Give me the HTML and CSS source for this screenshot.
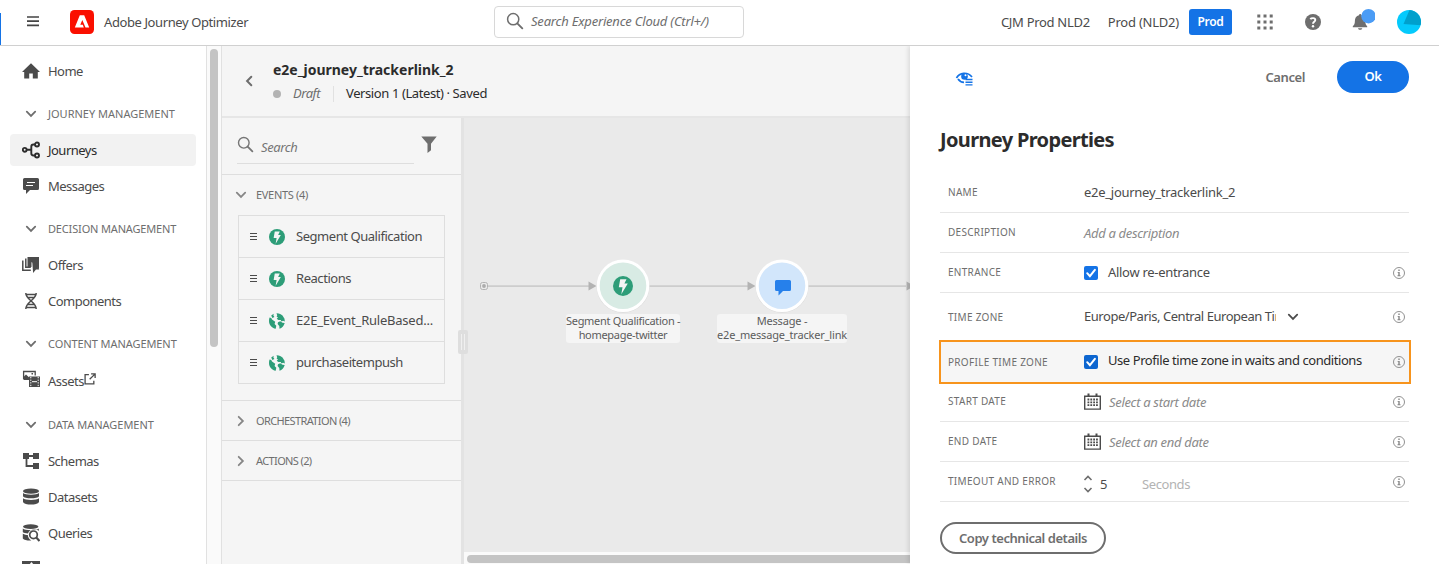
FILE: index.html
```html
<!DOCTYPE html>
<html lang="en">
<head>
<meta charset="utf-8">
<title>Adobe Journey Optimizer</title>
<link rel="stylesheet" href="styles.css">
</head>
<body>
<svg class="defs" aria-hidden="true">
  <symbol id="down" viewBox="0 0 12 8"><path d="M1.8 1.7 6 5.9l4.2-4.2" fill="none" stroke="currentColor" stroke-width="1.8" stroke-linecap="round"/></symbol>
  <symbol id="right" viewBox="0 0 8 12"><path d="M1.7 1.8 5.9 6l-4.2 4.2" fill="none" stroke="currentColor" stroke-width="1.8" stroke-linecap="round"/></symbol>
  <symbol id="search" viewBox="0 0 18 18"><circle cx="7.2" cy="7.2" r="5.6" fill="none" stroke="currentColor" stroke-width="1.5"/><path d="m11.3 11.3 5 5" stroke="currentColor" stroke-width="1.9" stroke-linecap="round"/></symbol>
  <symbol id="info" viewBox="0 0 12 12"><circle cx="6" cy="6" r="5.5" fill="none" stroke="currentColor" stroke-width=".9"/><path d="M5.3 2.6h1.4v1.5H5.3zM4.6 4.9h2.1v3.4h.8v.9H4.5v-.9h.8V5.8h-.7z" fill="currentColor"/></symbol>
  <symbol id="bolt" viewBox="0 0 20 20"><circle cx="10" cy="10" r="10" fill="#2d9d78"/><path d="M7.2 3.2h6.3l-2.1 4.4h3.4L8.3 18.3l1.2-7.1H5.8z" fill="#f5f5f5"/></symbol>
  <symbol id="globe" viewBox="0 0 16 16"><path d="M.6 4.600 2.300 5 3 6.600l3.200 2.100-.6 2.300 1.700 1.800-.6 2.900C2.700 15.200 0 11.800 0 8q0-1.900.6-3.400zM2.200 2.500 4.700.8l-.3 1.700 1 1.500-2 .9zM7.500.2c2.700-.1 4.700 1 6 2.200l2 3.300.3 2.800-1.700-.8-1.700.8-.6-1.500-2.400.1-1.700-1.400 1.300-1.300-1.400-.8.6-1.400zM9 9.200l2.200-1 2.300 1.600 2.200.2c-.7 3-2.800 5.200-5.200 5.800l-.2-2.700L8.600 11z" fill="#2d9d78"/></symbol>
  <symbol id="cal" viewBox="0 0 17 17"><path d="M.7 3.200h15.600v12.900H.7z" fill="none" stroke="currentColor" stroke-width="1.400"/><path d="M4.500.5v3.600M12.500.5v3.600" stroke="currentColor" stroke-width="2"/><path d="M3.500 6.500h10.500M3.500 9.300h10.500M3.500 12.100h10.500" stroke="currentColor" stroke-width="1.800" stroke-dasharray="1.800 1.050"/></symbol>
  <symbol id="check" viewBox="0 0 14 14"><path d="m3.200 7.200 2.700 3 5-6.300" fill="none" stroke="#fff" stroke-width="2" stroke-linecap="round"/></symbol>
</svg>

<header class="topbar">
  <svg class="burger" viewBox="0 0 12 11"><path d="M0 1h12M0 5.200h12M0 9.400h12" stroke="#444" stroke-width="1.700"/></svg>
  <svg class="logo" viewBox="0 0 24 24"><rect width="24" height="24" rx="4.500" fill="#fa0f00"/><path d="M9.800 5.300h4.400l5 12.200h-3.700L12.300 9.900l-2 4.800h2.500l1 2.800H4.800z" fill="#fff"/></svg>
  <span class="product">Adobe Journey Optimizer</span>
  <div class="global-search"><svg><use href="#search"/></svg><span>Search Experience Cloud (Ctrl+/)</span></div>
  <div class="account">
    <span class="org">CJM Prod NLD2</span><span class="sandbox">Prod (NLD2)</span><span class="badge">Prod</span>
    <svg class="apps" viewBox="0 0 16 16"><path d="M.3 2h15.400M.3 8h15.400M.3 14h15.400" stroke="#6e6e6e" stroke-width="3" stroke-dasharray="3 3.200"/></svg>
    <svg class="help" viewBox="0 0 16 16"><circle cx="8" cy="8" r="8" fill="#6e6e6e"/><path d="M5.300 5.100C6.200 3.900 10.300 3.300 10.300 6c0 1.700-2.300 1.900-2.300 3.700" fill="none" stroke="#fff" stroke-width="1.900"/><circle cx="8" cy="12.200" r="1.200" fill="#fff"/></svg>
    <svg class="bell" viewBox="0 0 24 24"><path d="M8 7.200a1.200 1.200 0 0 1 2.400 0c3 .7 3.900 3 3.900 5.600 0 3.200.6 4.200 1.900 5.500v1H1.800v-1c1.400-1.300 2.100-2.300 2.100-5.500 0-2.600 1.200-4.900 4.100-5.600zM7 20.200h4.300c-.4 2.200-3.900 2.200-4.300 0z" fill="#6e6e6e"/><circle cx="17.500" cy="8.200" r="7.200" fill="#4b9cf5"/></svg>
    <svg class="avatar" viewBox="0 0 24 24"><circle cx="12" cy="12" r="12" fill="#04cafc"/><path d="M12.500 0A12 12 0 0 1 23.600 15.200L6.500 14z" fill="#00a0cc"/></svg>
  </div>
</header>

<div class="shell">
  <nav class="sidebar">
    <a class="nav home"><svg viewBox="0 0 18 18"><path d="M9 1.200 18 10h-2.200v6.500h-5v-5H7.200v5h-5V10H0z" fill="currentColor"/></svg>Home</a>
    <div class="group"><svg><use href="#down"/></svg>JOURNEY MANAGEMENT</div>
    <a class="nav active"><svg viewBox="0 0 18 18"><g fill="none" stroke="currentColor" stroke-width="1.900"><circle cx="2.700" cy="8.800" r="1.900"/><circle cx="15" cy="3.500" r="2"/><circle cx="15" cy="14.500" r="2"/><path d="M4.600 8.800H9M13 3.500h-1.500Q9.300 3.500 9.300 5.700v6.600q0 2.200 2.200 2.200H13"/></g></svg>Journeys</a>
    <a class="nav"><svg viewBox="0 0 18 18"><path d="M2.500 1h13Q17 1 17 2.500v9q0 1.500-1.500 1.500H8l-4 4v-4H2.500Q1 13 1 11.500v-9Q1 1 2.500 1z" fill="currentColor"/><path d="M5 5.500h8M4 8.500h7" stroke="#fff"/></svg>Messages</a>
    <div class="group decision"><svg><use href="#down"/></svg>DECISION MANAGEMENT</div>
    <a class="nav"><svg viewBox="0 0 18 18"><path d="M.8 4.500v9.700h8M3.800 2.500v8.800h5" fill="none" stroke="currentColor" stroke-width="1.500"/><path d="M5.500 1H17v12l-7.500-7v5h-4zM10.300 6.300l7 7.100-3.300.2-2.900 3.300z" fill="currentColor"/></svg>Offers</a>
    <a class="nav"><svg viewBox="0 0 18 18"><path d="M3.800 1c0 7 10.400 8.500 10.400 16M14.200 1c0 7-10.400 8.500-10.400 16M4 2.500h10M5.500 5.500h7M5.500 12.500h7M4 15.500h10" fill="none" stroke="currentColor" stroke-width="1.500"/></svg>Components</a>
    <div class="group"><svg><use href="#down"/></svg>CONTENT MANAGEMENT</div>
    <a class="nav assets"><svg class="media" viewBox="0 0 18 18"><path d="M1.600 9.500v-8h11.600v4" fill="none" stroke="currentColor" stroke-width="1.300"/><path d="M2 9V6.500l2-2 3.200 3V10H2zM9.500 3h1.500v1.500H9.500zM7 6.500h11V17H7z" fill="currentColor"/><path d="M8.800 7v10M16.200 7v10" stroke="#fff" stroke-dasharray="1.300 1.300"/><path d="M10 11.700h5" stroke="#fff"/></svg>Assets<svg class="external" viewBox="0 0 11 11"><path d="M4.500 1.500H1v8.500h8V7M6.500.8h3.700v3.700M10 1 5.200 5.800" fill="none" stroke="currentColor" stroke-width="1.200"/></svg></a>
    <div class="group"><svg><use href="#down"/></svg>DATA MANAGEMENT</div>
    <a class="nav"><svg viewBox="0 0 18 18"><path d="M1 1h6v6H1zM11 1h6v6h-6zM11 11h6v6h-6z" fill="currentColor"/><path d="M6 4h6M4.500 6v8H12" fill="none" stroke="currentColor" stroke-width="1.800"/></svg>Schemas</a>
    <a class="nav"><svg viewBox="0 0 18 18"><ellipse cx="9" cy="3.200" rx="8" ry="2.600" fill="currentColor"/><path d="M1 5c2 2.300 14 2.300 16 0v3.200c-1.500 2.700-14.500 2.700-16 0zM1 10.200c2 2.300 14 2.300 16 0v3.700c-1.500 3.500-14.500 3.500-16 0z" fill="currentColor"/></svg>Datasets</a>
    <a class="nav"><svg viewBox="0 0 18 18"><ellipse cx="8.700" cy="2.600" rx="7.700" ry="2.400" fill="currentColor"/><path d="M.8 4.600c2 2.200 14 2.200 16 0V7C14 4.500 7 5.300 6 9.500 4 9.400 1.500 9 .8 8zM.8 9.700c1.500 1 3.500 1.200 5 1.200.2 2.300 1.500 4.500 3.500 5.600-3 .4-7-.3-8.500-2z" fill="currentColor"/><circle cx="11.500" cy="10.800" r="3.800" fill="#fff" stroke="currentColor" stroke-width="1.700"/><path d="m14.300 13.600 3.200 3.400" stroke="currentColor" stroke-width="2.200"/></svg>Queries</a>
    <a class="nav"><svg viewBox="0 0 18 18"><path d="M0 1h18v16H0z" fill="currentColor"/><path d="m9.500 2 2 2.500h-4z" fill="#fff"/></svg></a>
  </nav>
  <div class="gutter"><div class="thumb"></div></div>

  <main class="journey">
    <section class="journey-head">
      <svg class="back" viewBox="0 0 8 12"><path d="M6.300 1.800 2.100 6l4.200 4.200" fill="none" stroke="#6e6e6e" stroke-width="2" stroke-linecap="round"/></svg>
      <div>
        <h1>e2e_journey_trackerlink_2</h1>
        <div class="status"><i></i><em>Draft</em><span>Version 1 (Latest) · Saved</span></div>
      </div>
    </section>
    <div class="workspace">
      <aside class="palette">
        <div class="palette-search">
          <div class="field"><svg><use href="#search"/></svg><span>Search</span></div>
          <svg class="filter" viewBox="0 0 16 17"><path d="M.3.500h15.400L10 7.800v6.500L6.500 17V7.800z" fill="#6e6e6e"/></svg>
        </div>
        <div class="section open"><svg><use href="#down"/></svg>EVENTS (4)</div>
        <ul class="events">
          <li><b></b><svg><use href="#bolt"/></svg><span>Segment Qualification</span></li>
          <li><b></b><svg><use href="#bolt"/></svg><span>Reactions</span></li>
          <li><b></b><svg><use href="#globe"/></svg><span class="wide">E2E_Event_RuleBased...</span></li>
          <li><b></b><svg><use href="#globe"/></svg><span>purchaseitempush</span></li>
        </ul>
        <div class="section"><svg><use href="#right"/></svg>ORCHESTRATION (4)</div>
        <div class="section"><svg><use href="#right"/></svg>ACTIONS (2)</div>
        <div class="grip"></div>
      </aside>
      <div class="canvas">
        <svg class="flow" viewBox="464 117 446 435">
          <path d="M488 286.200h102M649 286.200h100M808 286.200h98" stroke="#cdcdcd" stroke-width="1.700"/>
          <path d="m588.500 281.500 8 4.500-8 4.500zM747.500 281.500l8 4.500-8 4.500zM906.500 281.500l8 4.500-8 4.500z" fill="#b3b3b3"/>
          <rect x="480.500" y="282.500" width="7" height="7" rx="2" fill="#eaeaea" stroke="#b3b3b3"/><circle cx="484" cy="286" r="1.900" fill="#acacac"/>
          <circle cx="623" cy="286.300" r="26.500" fill="#dcdcdc"/><circle cx="623" cy="285.800" r="24.800" fill="#d8ebe4" stroke="#fff" stroke-width="3"/>
          <use href="#bolt" x="613" y="276" width="20" height="20"/>
          <circle cx="782" cy="286.300" r="26.500" fill="#dcdcdc"/><circle cx="782" cy="285.800" r="24.800" fill="#d2e6fb" stroke="#fff" stroke-width="3"/>
          <path d="M776.500 280h13q1.500 0 1.500 1.500v8q0 1.500-1.500 1.500H783l-4.500 4.500V291h-2q-1.500 0-1.500-1.500v-8q0-1.500 1.500-1.500z" fill="#2680eb"/>
        </svg>
        <div class="label segment">Segment Qualification -<br>homepage-twitter</div>
        <div class="label message">Message -<br>e2e_message_tracker_link</div>
        <div class="hscroll"><div></div></div>
      </div>
    </div>
  </main>

  <aside class="properties">
    <div class="actions">
      <svg class="preview" viewBox="0 0 20 18"><path d="M1.500 9C4.500 3.300 12.500 2.500 17 8M3 10c1.500 2.200 3.500 3.200 6 3.300" fill="none" stroke="#1473e6" stroke-width="1.700"/><circle cx="9.500" cy="7.500" r="3.300" fill="#1473e6"/><circle cx="10.500" cy="6.300" r="1" fill="#fff"/><path d="M10.500 10.500h7M10.500 13.200h7M10.500 15.900h7" stroke="#1473e6" stroke-width="1.400"/></svg>
      <span class="cancel">Cancel</span><span class="ok">Ok</span>
    </div>
    <h2>Journey Properties</h2>
    <div class="rows">
      <div class="row"><label>NAME</label><span class="name">e2e_journey_trackerlink_2</span></div>
      <div class="row"><label>DESCRIPTION</label><em>Add a description</em></div>
      <div class="row"><label>ENTRANCE</label><svg class="box"><use href="#check"/></svg><span class="option allow">Allow re-entrance</span><svg class="info"><use href="#info"/></svg></div>
      <div class="row zone"><label>TIME ZONE</label><span class="clip">Europe/Paris, Central European Time</span><svg class="drop"><use href="#down"/></svg><svg class="info"><use href="#info"/></svg></div>
      <div class="row highlight"><label>PROFILE TIME ZONE</label><svg class="box"><use href="#check"/></svg><span class="option">Use Profile time zone in waits and conditions</span><svg class="info"><use href="#info"/></svg></div>
      <div class="row start"><label>START DATE</label><svg class="cal"><use href="#cal"/></svg><em>Select a start date</em><svg class="info"><use href="#info"/></svg></div>
      <div class="row"><label>END DATE</label><svg class="cal"><use href="#cal"/></svg><em>Select an end date</em><svg class="info"><use href="#info"/></svg></div>
      <div class="row timeout"><label>TIMEOUT AND ERROR</label><svg class="stepper" viewBox="0 0 10 18"><path d="M1.500 5 5 1.500 8.500 5M1.500 13 5 16.500 8.500 13" fill="none" stroke="#6e6e6e" stroke-width="1.600"/></svg><span class="amount">5</span><span class="unit">Seconds</span><svg class="info"><use href="#info"/></svg></div>
    </div>
    <span class="copy">Copy technical details</span>
  </aside>
</div>
</body>
</html>
```
FILE: styles.css
```css
* { box-sizing: border-box; }
body { margin: 0; width: 1439px; height: 564px; overflow: hidden; background: #fff; color: #4b4b4b; font: 13px/18px "Noto Sans", "Open Sans", sans-serif; letter-spacing: -.4px; }
svg { display: block; flex: none; }
span, em { white-space: nowrap; }
.defs { position: absolute; width: 0; height: 0; }

.topbar { height: 46px; border-bottom: 1px solid #d0d0d0; display: flex; align-items: center; padding: 0 18px 2px 27px; position: relative; }
.topbar::before { content: ""; position: absolute; left: 0; top: 13px; width: 1px; height: 32px; background: #1473e6; }
.burger { width: 12px; height: 11px; }
.logo { width: 24px; height: 24px; margin-left: 31px; }
.product { margin-left: 10px; width: 390px; }
.global-search { width: 250px; height: 32px; border: 1px solid #d8d8d8; border-radius: 4px; display: flex; align-items: center; gap: 7px; padding: 0 0 1px 11px; color: #6e6e6e; font-style: italic; letter-spacing: -.2px; }
.global-search svg { width: 18px; height: 18px; }
.account { margin-left: auto; display: flex; align-items: center; letter-spacing: -.3px; }
.sandbox { margin: 0 10px 0 18px; letter-spacing: -.22px; }
.badge { width: 43px; height: 26px; border-radius: 3px; background: #1473e6; color: #fff; font-size: 12px; line-height: 25px; font-weight: 600; text-align: center; }
.apps { width: 16px; height: 16px; margin-left: 25px; }
.help { width: 16px; height: 16px; margin-left: 32px; }
.bell { width: 24px; height: 24px; margin: -4px 1px 0 30px; }
.avatar { width: 24px; height: 24px; margin-left: 21px; }

.shell { display: flex; height: 518px; }
.sidebar { width: 207px; border-right: 1px solid #e1e1e1; overflow: hidden; padding: 10px 10px 0; }
.nav { height: 32px; margin-bottom: 4px; border-radius: 4px; display: flex; align-items: center; padding: 0 0 1px 12px; letter-spacing: -.52px; }
.nav svg { width: 18px; height: 18px; margin-right: 8px; }
.nav .media { margin-top: -4px; }
.nav .external { width: 12px; height: 12px; margin: -3px 0 0 0; }
.home { margin-bottom: 0; padding-bottom: 2px; }
.active { background: #f2f2f2; color: #2c2c2c; }
.group { height: 46px; display: flex; align-items: center; padding: 4px 0 0 15px; font-size: 11px; color: #6e6e6e; letter-spacing: -.08px; }
.group svg { width: 12px; height: 8px; margin-right: 11px; }
.nav + .group { height: 43px; padding-top: 2px; }
.home + .group { height: 46px; padding-top: 6px; letter-spacing: 0; }
.nav + .decision { letter-spacing: -.16px; }
.nav.assets { height: 32px; padding-top: 1px; padding-bottom: 0; margin-bottom: 3px; }
.assets + .group { height: 46px; padding-top: 6px; letter-spacing: -.02px; }
.gutter { width: 14px; background: #fafafa; padding: 3px; }
.thumb { width: 8px; height: 298px; border-radius: 4px; background: #c4c4c4; }

.journey { width: 689px; border-left: 1px solid #e1e1e1; background: #f5f5f5; }
.journey-head { height: 72px; border-bottom: 2px solid #e6e6e6; display: flex; padding: 14px 0 0 23px; }
.back { width: 8px; height: 12px; margin: 15px 20px 0 0; }
h1 { margin: 0; font-size: 14px; line-height: 20px; font-weight: 700; letter-spacing: 0; color: #2c2c2c; }
.status { height: 27px; display: flex; align-items: center; color: #2c2c2c; }
.status i { width: 8px; height: 8px; border-radius: 4px; background: #b3b3b3; margin-right: 12px; }
.status em { color: #6e6e6e; width: 41px; height: 16px; line-height: 15px; border-right: 1px solid #e1e1e1; margin-right: 12px; letter-spacing: -.45px; }
.status span { padding-bottom: 2px; }
.workspace { height: 446px; display: flex; }
.palette { width: 242px; border-right: 3px solid #e3e3e3; position: relative; }
.palette-search { height: 57px; border-bottom: 1px solid #dedede; display: flex; padding-left: 15px; }
.field { width: 177px; height: 46px; border-bottom: 1px solid #dedede; display: flex; color: #767676; font-style: italic; }
.field svg { width: 17px; height: 17px; margin: 18px 7px 0 0; }
.field span { margin-top: 20px; }
.filter { width: 16px; height: 17px; margin: 18px 0 0 7px; }
.section { height: 40px; display: flex; align-items: center; padding-left: 15px; border-bottom: 1px solid #dedede; font-size: 11px; letter-spacing: -.62px; color: #6e6e6e; }
.section svg { width: 8px; height: 12px; margin-right: 11px; color: #868686; }
.section.open { border: 0; letter-spacing: -.3px; padding-left: 13px; }
.section.open svg { width: 12px; height: 8px; margin-right: 9px; }
.events { list-style: none; margin: 0; padding: 0 0 16px 16px; border-bottom: 1px solid #dedede; }
.events li { width: 207px; height: 42px; border: 1px solid #dedede; border-bottom: 0; display: flex; align-items: center; padding-left: 11px; }
.events li:last-child { height: 43px; border-bottom: 1px solid #dedede; }
.events span { padding-bottom: 2px; letter-spacing: -.45px; }
.events .wide { letter-spacing: -.22px; }
.events b { width: 7px; height: 7px; border-top: 1px solid #4b4b4b; border-bottom: 1px solid #4b4b4b; background: linear-gradient(#4b4b4b, #4b4b4b) 0 50% / 100% 1px no-repeat; }
.events svg { width: 16px; height: 16px; margin: 1px 11px 0 12px; }
.grip { position: absolute; left: 236px; top: 212px; width: 10px; height: 24px; border-radius: 2px; background: #dedede; z-index: 1; }
.grip::after { content: ""; position: absolute; inset: 4px 3px; border: solid #f0f0f0; border-width: 0 1px; }
.canvas { width: 446px; background: #eaeaea; position: relative; }
.flow { width: 446px; height: 435px; margin-top: -1px; }
.label { position: absolute; top: 196px; height: 29px; border-radius: 3px; background: #f5f5f5; font-size: 11px; line-height: 14px; text-align: center; color: #5c5c5c; letter-spacing: -.3px; white-space: nowrap; }
.segment { left: 102px; width: 114px; }
.message { left: 253px; width: 130px; letter-spacing: -.18px; }
.hscroll { height: 12px; background: #fafafa; padding: 3px 0 0 3px; overflow: hidden; }
.hscroll div { width: 460px; height: 8px; border-radius: 4px; background: #c4c4c4; }

.properties { width: 529px; background: #fff; box-shadow: -2px 0 4px rgba(0, 0, 0, .1); padding: 0 30px; clip-path: inset(0 0 0 -8px); }
.actions { height: 62px; display: flex; align-items: center; font-weight: 600; }
.preview { width: 20px; height: 18px; margin: 1px 0 0 15px; }
.cancel { color: #6e6e6e; margin-left: auto; }
.ok { width: 72px; height: 32px; border-radius: 16px; background: #1473e6; color: #fff; line-height: 31px; text-align: center; margin-left: 32px; }
h2 { margin: 17px 0 18px; font-size: 20px; line-height: 30px; font-weight: 700; letter-spacing: -.66px; color: #2c2c2c; }
.rows { width: 469px; }
.row { height: 40px; border-bottom: 1px solid #e6e6e6; display: flex; align-items: center; padding: 0 4px 0 8px; }
.row label { width: 136px; font-size: 10px; letter-spacing: .3px; color: #6e6e6e; padding-bottom: 1px; }
.row span { letter-spacing: -.27px; }
.row em { color: #8a8a8a; letter-spacing: -.32px; padding-top: 1px; }
.row .name { padding-bottom: 2px; }
.box { width: 14px; height: 14px; border-radius: 2px; background: #1473e6; margin: 1px 10px 0 0; }
.row .option { letter-spacing: -.43px; padding-bottom: 2px; }
.row .allow { letter-spacing: -.3px; }
.info { width: 12px; height: 12px; margin-left: auto; color: #858585; }
.zone { height: 47px; border: 0; padding-top: 1px; }
.zone .clip { width: 192px; margin-right: 1px; overflow: hidden; letter-spacing: -.46px; padding-bottom: 2px; }
.drop { width: 12px; height: 8px; margin-left: 10px; }
.highlight { width: 472px; height: 44px; margin-left: -1px; border: 2px solid #f7941d; background: #f6f6f6; padding: 0 4px 0 7px; }
.highlight .box { background: #0d66d0; margin-top: 0; }
.row.highlight .option { color: #2c2c2c; padding-bottom: 4px; }
.start { height: 38px; padding-bottom: 2px; }
.start em { padding-top: 0; }
.cal { width: 17px; height: 17px; margin-right: 8px; }
.stepper { width: 10px; height: 18px; margin: 5px 7px 0 -1px; }
.row .amount { width: 42px; padding-top: 5px; }
.row .unit { padding-top: 5px; color: #b3b3b3; letter-spacing: -.4px; }
.copy { display: block; width: 166px; height: 32px; margin-top: 20px; border: 2px solid #6e6e6e; border-radius: 16px; line-height: 28px; text-align: center; font-weight: 600; color: #6e6e6e; letter-spacing: -.45px; }
```
